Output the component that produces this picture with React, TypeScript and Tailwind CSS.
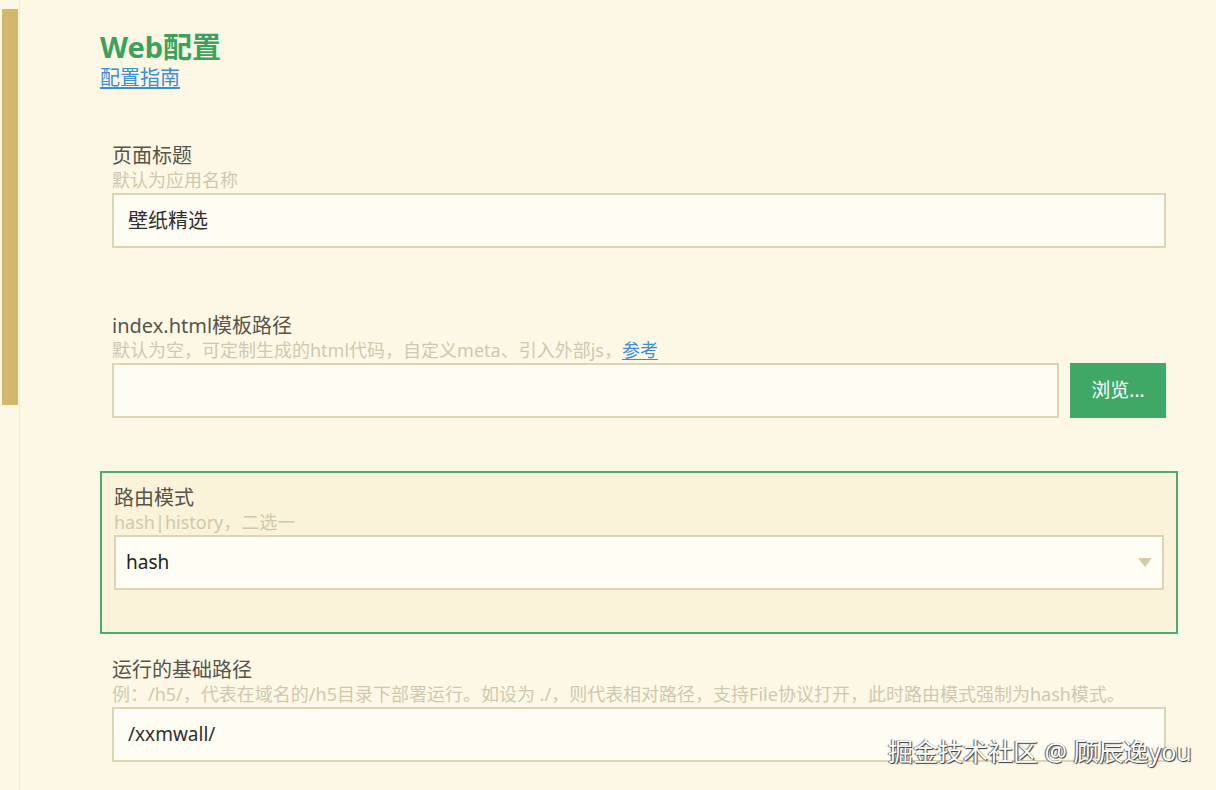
import React from 'react';

const font = { fontFamily: '"Noto Sans", "Noto Sans CJK SC", sans-serif' };

function Field({
    label,
    hint,
    focused,
    children,
}: {
    label: string;
    hint: React.ReactNode;
    focused?: boolean;
    children: React.ReactNode;
}) {
    return (
        <div
            className={
                focused
                    ? 'mb-[11px] border-2 border-[#4eab6b] bg-[#fbf3d9] px-3 pt-3 pb-[42px]'
                    : 'mb-[11px] px-3 pt-3 pb-[42px]'
            }
        >
            <div className="text-[20px] leading-[25px] text-[#56544a]">{label}</div>
            <div className="text-[18px] leading-[25px] text-[#cfc8ae] whitespace-nowrap">{hint}</div>
            {children}
        </div>
    );
}

export default function App() {
    return (
        <div className="relative flex h-[790px] w-full overflow-hidden bg-[#fdf8e6]" style={font}>
            {/* left scrollbar */}
            <div className="w-[20px] shrink-0 border-r border-[#f4ecd2] pl-[2px] pt-[9px]">
                <div className="h-[396px] w-4 bg-[#d3b86b]" />
            </div>

            <div className="flex-1 pl-[80px] pr-[38px] pt-[28px]">
                <h1 className="text-[29px] font-bold leading-[38px] text-[#3ba25e]">Web配置</h1>
                <a className="block w-fit text-[20px] leading-[24px] text-[#3a8ed6] underline underline-offset-2">配置指南</a>

                <div className="mt-[41px]">
                    <Field label="页面标题" hint="默认为应用名称">
                        <div className="flex h-[55px] items-center border-2 border-[#ddd4b1] bg-[#fffdf3] px-[14px] text-[20px] text-[#2f2f2f]">
                            壁纸精选
                        </div>
                    </Field>

                    <Field
                        label="index.html模板路径"
                        hint={
                            <>
                                默认为空，可定制生成的html代码，自定义meta、引入外部js，
                                <a className="text-[#3a8ed6] underline underline-offset-2">参考</a>
                            </>
                        }
                    >
                        <div className="flex h-[55px] gap-[11px]">
                            <div className="flex-1 border-2 border-[#ddd4b1] bg-[#fffdf3]" />
                            <button className="w-[96px] bg-[#3fa866] text-[19px] text-white">浏览...</button>
                        </div>
                    </Field>

                    <Field label="路由模式" hint="hash|history，二选一" focused>
                        <div className="flex h-[55px] items-center justify-between border-2 border-[#ddd4b1] bg-[#fffdf4] pl-[10px] pr-[10px] text-[19px] text-[#222]">
                            <span>hash</span>
                            <svg width="14" height="9" viewBox="0 0 14 9">
                                <polygon points="0,0 14,0 7,9" fill="#d6cba3" />
                            </svg>
                        </div>
                    </Field>

                    <Field
                        label="运行的基础路径"
                        hint="例：/h5/，代表在域名的/h5目录下部署运行。如设为 ./，则代表相对路径，支持File协议打开，此时路由模式强制为hash模式。"
                    >
                        <div className="flex h-[55px] items-center border-2 border-[#ddd4b1] bg-[#fffdf3] px-[14px] text-[19px] text-[#2f2f2f]">
                            /xxmwall/
                        </div>
                    </Field>
                </div>
            </div>

            {/* watermark */}
            <div className="absolute left-[888px] top-[734px] text-[25px] leading-[34px] text-white [text-shadow:1px_1px_1px_#333,-1px_0_1px_#555]">
                掘金技术社区 @ 顾辰逸you
            </div>
        </div>
    );
}
